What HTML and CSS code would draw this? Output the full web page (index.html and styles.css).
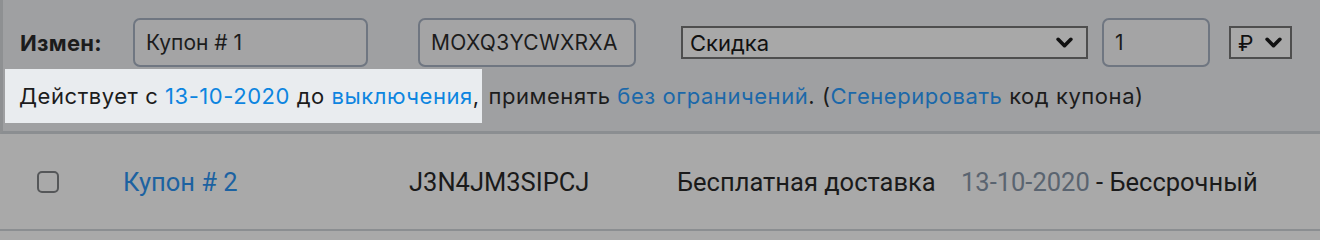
FILE: index.html
```html
<!DOCTYPE html>
<html lang="ru">
<head>
<meta charset="utf-8">
<title>Купоны</title>
<link rel="stylesheet" href="styles.css">
</head>
<body>
<div class="edit-panel">
  <div class="fields">
    <span class="label">Измен:</span>
    <div class="input input-name">Купон # 1</div>
    <div class="input input-code">MOXQ3YCWXRXA</div>
    <div class="select select-type"><span>Скидка</span>
      <svg class="chev" viewBox="0 0 16 10" width="17" height="11"><path d="M2 2 L8 8 L14 2" fill="none" stroke="#111" stroke-width="3.4" stroke-linecap="round" stroke-linejoin="round"/></svg>
    </div>
    <div class="input input-amount">1</div>
    <div class="select select-cur"><span>₽</span>
      <svg class="chev" viewBox="0 0 16 10" width="17" height="11"><path d="M2 2 L8 8 L14 2" fill="none" stroke="#111" stroke-width="3.4" stroke-linecap="round" stroke-linejoin="round"/></svg>
    </div>
  </div>
  <div class="info"><span class="spot">Действует с <a class="lnk-bright">13-10-2020</a> до <a class="lnk-bright">выключения</a>,</span> применять <a class="lnk">без ограничений</a>. (<a class="lnk">Сгенерировать</a> код купона)</div>
</div>
<div class="row">
  <span class="check"></span>
  <a class="row-name">Купон # 2</a>
  <span class="row-code">J3N4JM3SIPCJ</span>
  <span class="row-type">Бесплатная доставка</span>
  <span class="row-date"><span class="date">13-10-2020</span> - Бессрочный</span>
</div>
</body>
</html>
```

FILE: styles.css
```css
html, body {
  margin: 0;
  padding: 0;
  background: #a9a9a9;
  font-family: Inter, "Noto Sans", sans-serif;
  color: #1c1c1c;
}

.edit-panel {
  height: 131px;
  background: #9fa0a2;
  border-left: 3px solid #8e9092;
  border-bottom: 3px solid #8b8e91;
}

.fields {
  display: flex;
  align-items: center;
  padding-top: 18px;
  height: 49px;
}

.label {
  font-weight: 700;
  font-size: 22px;
  letter-spacing: 0.3px;
  margin-left: 17px;
  width: 113px;
}

.input {
  box-sizing: border-box;
  height: 49px;
  border: 2px solid #6f7681;
  border-radius: 7px;
  background: #a4a4a5;
  font-size: 21px;
  display: flex;
  align-items: center;
  padding-left: 11px;
}

.input-name { width: 235px; }
.input-code { width: 218px; margin-left: 50px; letter-spacing: 0.3px; }
.input-amount { width: 108px; margin-left: 14px; }

.select {
  box-sizing: border-box;
  height: 33px;
  border: 2px solid #4e4e4e;
  background: #a8a8a8;
  display: flex;
  align-items: center;
  justify-content: space-between;
  font-size: 22px;
  color: #111;
}

.select-type { width: 407px; margin-left: 45px; padding: 0 13px 0 7px; }
.select-cur { width: 63px; margin-left: 19px; padding: 0 8px 0 7px; }

.chev { display: block; }

.info {
  margin-top: 16px;
  padding-left: 16px;
  font-size: 22px;
  letter-spacing: 0.55px;
  line-height: 26px;
  white-space: nowrap;
}

.spot {
  background: #e9ecef;
  padding: 14px 2px 14px 14px;
  margin-left: -14px;
}

.lnk-bright { color: #0d85e0; }
.lnk { color: #1b68a9; }

.row {
  height: 95px;
  border-bottom: 2px solid #8b8e91;
  display: flex;
  align-items: center;
  font-family: Roboto, "Noto Sans", sans-serif;
  font-size: 25.5px;
  color: #1a1a1a;
}

.check {
  box-sizing: border-box;
  width: 22px;
  height: 22px;
  border: 2px solid #555759;
  border-radius: 5px;
  margin-left: 37px;
}

.row-name { color: #1c62a1; margin-left: 64px; width: 286px; }
.row-code { width: 268px; }
.row-type { width: 284px; }
.date { color: #5a6470; }
```
